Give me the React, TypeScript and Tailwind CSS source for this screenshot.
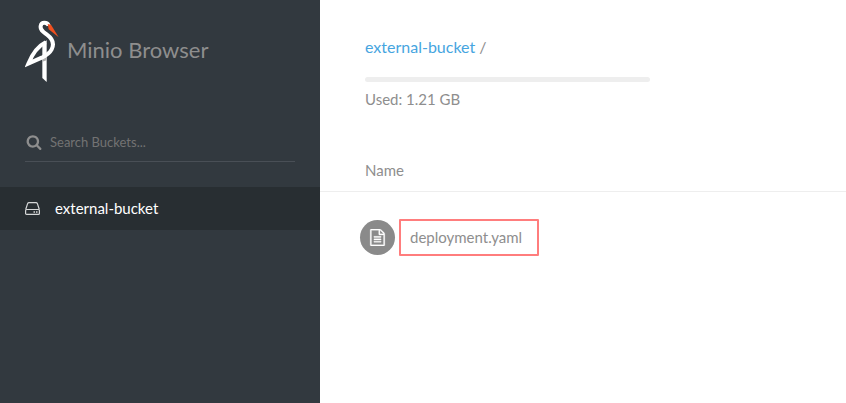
import React from "react";

function StorkLogo() {
  return (
    <svg className="h-[62px] w-[34px] shrink-0" viewBox="42 30 102 186" fill="none" aria-hidden="true">
      <path d="M94 99 L107 91 V216 L94 204 Z" fill="#fff" />
      <path d="M94 148 L107 141 V151 L94 155 Z" fill="#b0b0b0" />
      <path
        d="M113 47 C109 36 91 35 89 48 C87 61 98 66 108 74 C124 86 130 102 122 118 C116 130 104 137 92 143 L52 161 C64 132 80 109 104 97"
        stroke="#fff"
        strokeWidth="12"
        strokeLinejoin="miter"
      />
      <path d="M110 42 L120 44 L143 82 L113 58 Z" fill="#f1501f" />
    </svg>
  );
}

function SearchIcon() {
  return (
    <svg className="size-4 shrink-0" viewBox="0 0 1792 1792" fill="currentColor" aria-hidden="true">
      <path d="M1216 832q0-185-131.5-316.5t-316.5-131.5-316.5 131.5-131.5 316.5 131.5 316.5 316.5 131.5 316.5-131.5 131.5-316.5zm512 832q0 52-38 90t-90 38q-54 0-90-38l-343-342q-179 124-399 124-143 0-273.5-55.5t-225-150-150-225-55.5-273.5 55.5-273.5 150-225 225-150 273.5-55.5 273.5 55.5 225 150 150 225 55.5 273.5q0 220-124 399l343 343q37 37 37 90z" />
    </svg>
  );
}

function DriveIcon() {
  return (
    <svg className="h-[13px] w-[15px] shrink-0" viewBox="0 0 15 13" fill="none" stroke="currentColor" aria-hidden="true">
      <path d="M0.7 7.5 L2.6 1.6 Q3 0.6 4 0.6 H11 Q12 0.6 12.4 1.6 L14.3 7.5" strokeWidth="1.2" />
      <rect x="0.6" y="7.5" width="13.8" height="4.9" rx="1" strokeWidth="1.2" />
      <path d="M8.5 10 H10 M11 10 H12.5" strokeWidth="1.6" />
    </svg>
  );
}

function FileIcon() {
  return (
    <svg className="size-[17px]" viewBox="0 0 1792 1792" fill="currentColor" stroke="currentColor" strokeWidth="30" aria-hidden="true">
      <path d="M1596 380q28 28 48 76t20 88v1152q0 40-28 68t-68 28h-1344q-40 0-68-28t-28-68v-1600q0-40 28-68t68-28h896q40 0 88 20t76 48zm-444-244v376h376q-10-29-22-41l-313-313q-12-12-41-22zm384 1528v-1024h-416q-40 0-68-28t-28-68v-416h-768v1536h1280zm-1024-864q0-14 9-23t23-9h704q14 0 23 9t9 23v64q0 14-9 23t-23 9h-704q-14 0-23-9t-9-23v-64zm736 224q14 0 23 9t9 23v64q0 14-9 23t-23 9h-704q-14 0-23-9t-9-23v-64q0-14 9-23t23-9h704zm0 256q14 0 23 9t9 23v64q0 14-9 23t-23 9h-704q-14 0-23-9t-9-23v-64q0-14 9-23t23-9h704z" />
    </svg>
  );
}

function Sidebar() {
  return (
    <aside className="w-80 shrink-0 bg-[#32393f]">
      <div className="flex items-center gap-2 px-[25px] pt-5">
        <StorkLogo />
        <h1 className="pb-0.5 text-[22px] leading-8 text-[#8e8e8e]">Minio Browser</h1>
      </div>
      <label className="mx-[25px] mt-10 flex h-10 items-center gap-2 border-b border-[#494f56] pl-px text-[#8e8e8e]">
        <SearchIcon />
        <input
          type="text"
          aria-label="Search Buckets"
          placeholder="Search Buckets..."
          className="min-w-0 flex-1 bg-transparent text-[13px] leading-5 outline-none placeholder:text-[#737373]"
        />
      </label>
      <nav className="mt-[25px]">
        <a href="#external-bucket" className="flex h-[43px] items-center gap-[15px] bg-[#282e32] px-[25px] text-[15px] text-white">
          <span className="text-[#d5d7d8]">
            <DriveIcon />
          </span>
          <span className="pb-0.5">external-bucket</span>
        </a>
      </nav>
    </aside>
  );
}

export default function App() {
  return (
    <div className="flex min-h-screen bg-white font-['Lato',sans-serif] text-[15px] leading-5 text-[#8e8e8e]">
      <Sidebar />
      <main className="min-w-0 flex-1">
        <header className="px-[45px] pt-[37px]">
          <div className="text-base leading-5">
            <a href="#external-bucket" className="text-[#46a5e0]">external-bucket</a> /
          </div>
          <div className="mt-5 h-[5px] max-w-[285px] rounded-sm bg-[#eee]" />
          <div className="mt-[7px]">Used: 1.21 GB</div>
        </header>
        <table className="mt-[50px] w-full text-left">
          <thead>
            <tr className="h-8 border-b border-[#eee]">
              <th className="px-[45px] pb-2.5 font-normal">Name</th>
            </tr>
          </thead>
          <tbody>
            <tr>
              <td className="px-10 pt-[27px]">
                <div className="flex items-center gap-1">
                  <span className="flex size-[35px] items-center justify-center rounded-full bg-[#8a8a8a] text-white">
                    <FileIcon />
                  </span>
                  <a href="#deployment.yaml" className="flex h-[37px] w-[140px] items-center rounded-[1px] border-2 border-[#ff7d7d] px-[9px]">
                    deployment.yaml
                  </a>
                </div>
              </td>
            </tr>
          </tbody>
        </table>
      </main>
    </div>
  );
}
